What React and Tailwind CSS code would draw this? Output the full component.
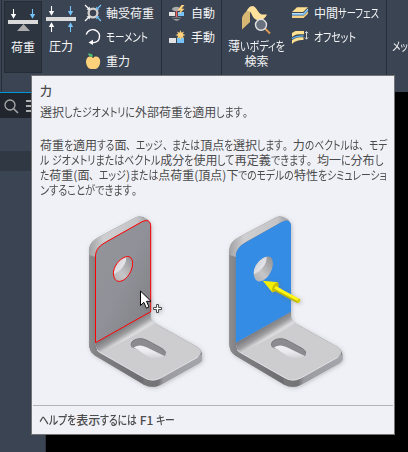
import { useLayoutEffect, useRef } from "react";

const font = "font-['Noto_Sans_CJK_JP',sans-serif] whitespace-pre";

// Sets kana narrower than kanji, so that the line is `width` pixels long.
function Line({ text, width }) {
  const line = useRef(null);
  useLayoutEffect(() => {
    const runs = [...line.current.children];
    let fixed = 0;
    let flexible = 0;
    for (const run of runs) {
      run.style.width = "";
      run.firstChild.style.transform = "none";
      const w = run.firstChild.getBoundingClientRect().width;
      run.naturalWidth = w;
      if (run.dataset.kana) flexible += w;
      else fixed += w;
    }
    const k = flexible ? (width - fixed) / flexible : 1;
    for (const run of runs) {
      if (!run.dataset.kana) continue;
      run.style.width = `${run.naturalWidth * k}px`;
      run.firstChild.style.transform = `scaleX(${k})`;
    }
  }, [text, width]);
  const runs = text.match(/[ぁ-んァ-ヶー]+|[、。]|[^ぁ-んァ-ヶー、。]+/g);
  return (
    <span ref={line} className="inline-flex">
      {runs.map((run, i) => (
        <span
          key={i}
          data-kana={/[ぁ-んァ-ヶー、。]/.test(run) ? "1" : undefined}
          className="block shrink-0"
        >
          <span className={/[、。]/.test(run) ? "inline-block origin-left" : "inline-block origin-left [font-feature-settings:'palt']"}>{run}</span>
        </span>
      ))}
    </span>
  );
}

function DownArrow({ x, y, color, up }) {
  return (
    <g transform={`translate(${x} ${y}) scale(1 ${up ? -1 : 1})`}>
      <path d="M0-5V2" stroke={color} strokeWidth="1.1" />
      <path d="M-2.7 0H2.7L0 4.7Z" fill={color} />
    </g>
  );
}

function LoadIcon() {
  return (
    <svg className="block h-9 w-[38px]" viewBox="4 0 38 36">
      <DownArrow x={13.5} y={14} color="#fff" />
      <DownArrow x={32.5} y={14} color="#75c3f8" />
      <path d="M8 20H38V24H8Z" fill="#dadada" />
      <path d="M23.5 24L30 31H17Z" fill="#acacac" />
    </svg>
  );
}

function PressureIcon() {
  return (
    <svg className="block h-9 w-[38px]" viewBox="42 0 38 36">
      <DownArrow x={51.5} y={11} color="#fff" />
      <DownArrow x={70.5} y={11} color="#75c3f8" />
      <DownArrow x={51.5} y={27} color="#fff" up />
      <DownArrow x={70.5} y={27} color="#75c3f8" up />
      <path d="M46 17H76V21H46Z" fill="#dadada" />
    </svg>
  );
}

function BearingIcon() {
  return (
    <svg className="block size-[18px]" viewBox="84 4 18 18">
      <circle cx="93" cy="13" r="4.4" fill="none" stroke="#d4d1cc" strokeWidth="2.3" />
      <path d="M85 5L89 9M85 21L89 17" stroke="#fff" strokeWidth="1.2" />
      <path d="M89.8 6.5V9.8H86.5ZM89.8 19.5V16.2H86.5Z" fill="#fff" />
      <path d="M101 5L97 9M101 21L97 17" stroke="#75c3f8" strokeWidth="1.2" />
      <path d="M96.2 6.5V9.8H99.5ZM96.2 19.5V16.2H99.5Z" fill="#75c3f8" />
    </svg>
  );
}

function MomentIcon() {
  return (
    <svg className="block size-[18px]" viewBox="84 28 18 18">
      <path d="M86.2 34.5C87.5 30.7 91.3 28.7 95 30C99 31.5 100.7 35.6 99 39.2C97.8 41.7 95.4 42.8 92 42.6" fill="none" stroke="#fff" strokeWidth="1.4" />
      <path d="M88.5 42.6L93 39.8V45Z" fill="#fff" />
    </svg>
  );
}

function AppleIcon() {
  return (
    <svg className="block size-[18px]" viewBox="84 52 18 18">
      <path d="M93 57.5C90 55 86 57 86 61.5C86 65.5 88.5 69 91 69H95.5C98 69 100.2 65 100.2 61.5C100.2 57 96 55.3 93 57.5Z" fill="#ffd17b" />
      <path d="M88 53.7C91 53 93 54.2 93.2 57C90.5 57 88.6 56 88 53.7Z" fill="#49bd75" />
      <path d="M93 58C93 56 93.6 54.5 95 54" fill="none" stroke="#30333a" />
    </svg>
  );
}

function AutoIcon() {
  return (
    <svg className="block size-[18px]" viewBox="168 4 18 18">
      <path d="M172 9.5C172 6 180 5.5 181 9.5L179 11H174Z" fill="#aaa" />
      <path d="M172 17.5C175 22 179 21.5 181 17.5Z" fill="#aaa" />
      <path d="M173 18.6H180" stroke="#353c48" />
      <path d="M169 12H175V16H169Z" fill="#e3e3e3" />
      <path d="M178 12H184V16H178Z" fill="#75c3f8" />
      <path d="M176.5 11V17" stroke="#ef625b" strokeWidth="1.5" />
      <path d="M181.5 5L177.5 10.4H180.6L178.2 15L184.5 8.8H181.5L184.5 5Z" fill="#ffd17b" />
    </svg>
  );
}

function ManualIcon() {
  return (
    <svg className="block size-[18px]" viewBox="168 28 18 18">
      <path d="M169 38H176V43H169Z" fill="#e3e3e3" />
      <path d="M177 38H184V43H177Z" fill="#75c3f8" />
      <path d="M180.5 30L181.5 32.8L184 31.5L182.9 34.1L185.5 35L182.9 36L184 38.5L181.5 37.5L180.5 40L179.5 37.5L177 38.5L178.1 36L175.5 35L178.1 34.1L177 31.5L179.5 32.8Z" fill="#ffd17b" />
    </svg>
  );
}

function ThinBodyIcon() {
  return (
    <svg className="mx-auto block h-9 w-9" viewBox="238 0 36 36">
      <path d="M241 17.5C243 13 245 11 249 11V22L241 29.5Z" fill="#d6b873" />
      <path d="M245 12C247 9 248 6 252 6C256 7 257 14 261 14.5H266C264 19 260 21 256 20C251 19 251 12 248 11Z" fill="#ffe19b" />
      <path d="M264 28.5L269 33.5" stroke="#db9956" strokeWidth="2" />
      <circle cx="260" cy="24.8" r="5.5" fill="#69717e" stroke="#e1e1e1" strokeWidth="1.4" />
    </svg>
  );
}

function MidSurfaceIcon() {
  return (
    <svg className="block size-[18px]" viewBox="291 4 18 18">
      <path d="M292 12L297 7.2H308L303 12Z" fill="#ffdf91" />
      <path d="M292 13H303.3L308 8.5V11L303.5 15.6H292Z" fill="#e9f1f8" />
      <path d="M292 14.2H303.3L308 9.8" fill="none" stroke="#46a9ed" strokeWidth="1.1" />
      <path d="M292 16H303.5L308 11.8V13.7L303.5 18H292Z" fill="#f5d182" />
    </svg>
  );
}

function OffsetIcon() {
  return (
    <svg className="block size-[18px]" viewBox="291 28 18 18">
      <path d="M292 33L295.5 31H304V34.2H299C296 34.2 294 35.3 292 37Z" fill="#ffdf91" />
      <path d="M292 38.8C295 36.5 297 35.8 303.5 35.8" fill="none" stroke="#59b5f4" strokeWidth="1.2" />
      <path d="M292 40.3C295 37.7 298 37.3 303.5 37.3V40C298 40 295 41 292 44Z" fill="#ffdf91" />
      <path d="M306.5 32V39M305 33.2L306.5 31.5L308 33.2M305 37.5L306.5 39.2L308 37.5" fill="none" stroke="#e4e4e4" strokeWidth=".9" />
    </svg>
  );
}

function Row({ icon, children, className }) {
  return (
    <div className="flex h-6 items-center">
      {icon}
      <span className={className}>{children}</span>
    </div>
  );
}

function Bracket({ selected }) {
  const face = "M95.5 342.7V256C95.7 249 100 245.4 106.7 241.7L141 222.3C147 219 150.7 220.5 150.7 226.5V311.7Z";
  const hole = "M127.5 256.5C131.5 256.2 133.3 261 132.4 266C131 274 125 281.3 119.2 281.4C114.8 281.4 112.8 276 113.6 271C115 264 121.5 257 127.5 256.5Z";
  const clip = selected ? "holeSelected" : "holePlain";
  return (
    <g>
      <path d="M89 343V253C89 244 92 241 99 237L135 217.7Q141 215 146 219L150.7 224V317Q151 321.5 155 323.5L196.7 346.7Q202 350 202 355V360Q201 362 198 363.7L160 385Q151.7 389 143.3 384.3L95 355.5Q89 352 89 343Z" fill="#808083" filter="url(#shadow)" />
      <path d="M89 343V253L96 250V343Q96 350 100 352.5L145 378V385.2L95 355.5Q89 352 89 343Z" fill="url(#side)" />
      <path d="M89 255C88.5 244 92 241 99 237L135 217.7Q141 215 149 220.4L141 222.3L106 241.8Q96 247 95.5 257Z" fill="url(#rim)" />
      <path d="M143.3 377L151.7 379.5L160 378L202 354V360Q201 362 198 363.7L160 385Q151.7 389 143.3 384.3Z" fill="url(#edge)" />
      <path d="M95.5 343L150.7 311.7V317Q151 321.5 155 323.5L196.7 346.7Q205 352 197 357.5L160 378.3Q151.7 382.5 143.3 377.2L100 352.5Q96 350 95.5 343Z" fill="#cdcdd0" />
      <path d="M95.5 343L150.7 311.7V317Q151 321.5 157 324.5L101 352.3Q96 350 95.5 343Z" fill="url(#bend)" />
      <path d="M97 350Q98 351.5 100 352.5L143.3 377.2Q151.7 382.5 160 378.3L198 357" fill="none" stroke="#e6e6ea" strokeWidth=".9" />
      <path d={face} fill={selected ? "#348ce5" : "url(#face)"} stroke={selected ? "none" : "#ff0000"} />
      <clipPath id={clip}><path d={hole} /></clipPath>
      <g clipPath={`url(#${clip})`}>
        <path d="M110 254H136V284H110Z" fill="url(#hole)" />
        <path d="M126 255C127.5 262 123 270 112 275V255Z" fill="url(#through)" />
      </g>
      <path d={hole} fill="none" stroke={selected ? "none" : "#ff0000"} />
      <path d="M131.2 344C130.5 340.5 137 338.2 142 338.7Q146 339.5 149 341.4L162 348.5C166.5 351.2 166.5 355 164.5 356L138 350C133.7 347.7 133.7 348.5 131.2 347Z" fill="#8b8b90" />
      <path d="M133.7 347.6Q139 343.6 146 347L164 355.8C159 359 151 358.5 147 356L138 350Z" fill="url(#slot)" />
      <path d="M131.2 345.5C130.5 340.5 137 338.2 142 338.7Q146 339.5 149 341.4L162 348.5C164.5 350 165.5 351.5 165.3 353" fill="none" stroke="#737377" strokeWidth=".9" />
    </g>
  );
}

function Illustration() {
  return (
    <svg className="mt-1.5 block h-[202px] w-[362px] shrink-0" viewBox="32 203 362 202">
      <defs>
        <filter id="shadow" x="-20%" y="-20%" width="140%" height="140%">
          <feDropShadow dx="1" dy="1" stdDeviation="2" floodColor="#666" floodOpacity=".4" />
        </filter>
        <linearGradient id="side"><stop stopColor="#8e8e91" /><stop offset=".12" stopColor="#828285" /><stop offset="1" stopColor="#6c6c70" /></linearGradient>
        <linearGradient id="rim"><stop stopColor="#a2a2a4" /><stop offset=".25" stopColor="#cfcfd1" /><stop offset=".8" stopColor="#c4c4c6" /><stop offset="1" stopColor="#9d9d9f" /></linearGradient>
        <linearGradient id="edge"><stop stopColor="#77777a" /><stop offset=".25" stopColor="#737376" /><stop offset=".35" stopColor="#9b9ba1" /><stop offset="1" stopColor="#a5a5ad" /></linearGradient>
        <linearGradient id="face" x1="0" y1="0" x2="1" y2="1"><stop stopColor="#94949a" /><stop offset=".5" stopColor="#909098" /><stop offset="1" stopColor="#7e7e83" /></linearGradient>
        <linearGradient id="bend" gradientUnits="userSpaceOnUse" x1="120" y1="328" x2="128" y2="341"><stop stopColor="#77777b" /><stop offset=".45" stopColor="#9d9da0" /><stop offset=".8" stopColor="#dddde0" /><stop offset="1" stopColor="#cdcdd0" /></linearGradient>
        <linearGradient id="hole" x1="0" y1="1" x2="1" y2="0"><stop stopColor="#a6a6a9" /><stop offset=".4" stopColor="#c6c6c9" /><stop offset="1" stopColor="#858588" /></linearGradient>
        <linearGradient id="through" x1="0" y1="0" x2="1" y2="1"><stop stopColor="#c9c9ce" /><stop offset="1" stopColor="#f0f1f6" /></linearGradient>
        <linearGradient id="slot" x1="0" y1="0" x2="0" y2="1"><stop stopColor="#f0f0f5" /><stop offset=".5" stopColor="#ebebef" /><stop offset="1" stopColor="#d2d2d5" /></linearGradient>
      </defs>
      <Bracket />
      <g transform="translate(140.3 0)"><Bracket selected /></g>
      <g filter="url(#shadow)">
        <path d="M274 288L298.7 301.3" stroke="#bfb900" strokeWidth="4.6" />
        <path d="M274 287L299 300.3" stroke="#fff719" strokeWidth="3" />
        <path d="M262.7 280.7L277.5 282.2Q280 287 272.5 292.5Z" fill="#f4ee00" />
        <ellipse cx="275.3" cy="287.3" rx="2.5" ry="5.3" transform="rotate(29 275.3 287.3)" fill="#c8c000" />
        <path d="M275 287.3L281 290.5" stroke="#fff719" strokeWidth="3" />
        <ellipse cx="298.8" cy="300.8" rx="1.5" ry="2.2" transform="rotate(29 298.8 300.8)" fill="#d8d000" />
      </g>
      <g filter="url(#shadow)">
        <path d="M140.5 291V305.5L143.8 302.3L146.4 308.2L149 307L146.5 301.3H151Z" fill="#fff" stroke="#000" />
        <path d="M156.5 304.5H158.5V307.5H161.5V309.5H158.5V312.5H156.5V309.5H153.5V307.5H156.5Z" fill="#fff" stroke="#4b4b4b" />
      </g>
    </svg>
  );
}

export default function App() {
  return (
    <div className={`relative h-[452px] w-[408px] overflow-hidden bg-black text-[12px] leading-[15px] text-[#f4f5f6] ${font}`}>
      <header className="flex h-[92px] bg-[#3b4453]">
        <div className="w-1 pl-px"><div className="h-full w-px bg-[#252d38]" /></div>
        <div className="mt-px h-[72px] w-[38px] border border-[#252c36] bg-[#2d3540] text-center">
          <div className="-ml-px -mt-0.5"><LoadIcon /></div>
          <div className="mt-[3px]">荷重</div>
        </div>
        <div className="w-[38px] text-center">
          <PressureIcon />
          <div className="mt-[2px]">圧力</div>
        </div>
        <div className="w-[82px] border-r border-[#252d38] pl-1 pt-px">
          <Row icon={<BearingIcon />} className="ml-1 pb-0.5">軸受荷重</Row>
          <Row icon={<MomentIcon />} className="ml-1 pb-0.5"><Line text="モーメント" width={42} /></Row>
          <Row icon={<AppleIcon />} className="ml-1 pb-0.5">重力</Row>
        </div>
        <div className="w-[60px] border-r border-[#252d38] pl-[6px] pt-px">
          <Row icon={<AutoIcon />} className="ml-[5px] pb-0.5">自動</Row>
          <Row icon={<ManualIcon />} className="ml-[5px] pb-0.5">手動</Row>
        </div>
        <div className="w-[69px] text-center">
          <ThinBodyIcon />
          <div className="mt-[2px] flex h-[15px] justify-center"><Line text="薄いボディを" width={57} /></div>
          <div>検索</div>
        </div>
        <div className="w-[96px] border-r border-[#252d38] pt-px">
          <Row icon={<MidSurfaceIcon />} className="ml-[5px] pb-0.5"><Line text="中間サーフェス" width={65} /></Row>
          <Row icon={<OffsetIcon />} className="ml-[5px] pb-0.5"><Line text="オフセット" width={42} /></Row>
        </div>
        <div className="w-[21px] pl-[5px] pt-[38px]"><Line text="メッ" width={16} /></div>
      </header>
      <aside className="h-[360px] w-[46px] border-r border-[#2b333f] bg-[#3b4453]">
        <div className="h-[26px] border-t border-[#0096db] bg-[#20252e]">
          <svg className="h-[25px] w-[36px]" viewBox="0 93 36 25">
            <circle cx="10" cy="105" r="5" fill="none" stroke="#aaa" strokeWidth="1.3" />
            <path d="M13.7 108.7L18 113" stroke="#aaa" strokeWidth="1.5" />
            <path d="M26 101H36M26 106H36M26 111H36" stroke="#ddd" strokeWidth="1.7" />
          </svg>
        </div>
        <div className="mt-[33px] h-5 bg-[#303844]" />
      </aside>
      <section className="absolute left-[31px] top-[75px] flex h-[360px] w-[364px] flex-col border border-[#747474] bg-[#f0f1f7] text-[#4b4b4b]">
        <h1 className="ml-2 mt-[7px] h-[15px] font-medium">力</h1>
        <p className="ml-2 mt-[6px] h-[15px]"><Line text="選択したジオメトリに外部荷重を適用します。" width={213} /></p>
        <div className="ml-2 mt-[18px] flex h-[60px] flex-col">
          <Line text="荷重を適用する面、エッジ、または頂点を選択します。力のベクトルは、モデ" width={347} />
          <Line text="ル ジオメトリまたはベクトル成分を使用して再定義できます。均一に分布し" width={343} />
          <Line text="た荷重(面、エッジ)または点荷重(頂点)下でのモデルの特性をシミュレーショ" width={347} />
          <Line text="ンすることができます。" width={102} />
        </div>
        <Illustration />
        <footer className="mx-px h-[30px] border-t border-[#b5b5b8] pl-[6px] pt-[6px] font-medium"><Line text="ヘルプを表示するには F1 キー" width={136} /></footer>
      </section>
    </div>
  );
}
